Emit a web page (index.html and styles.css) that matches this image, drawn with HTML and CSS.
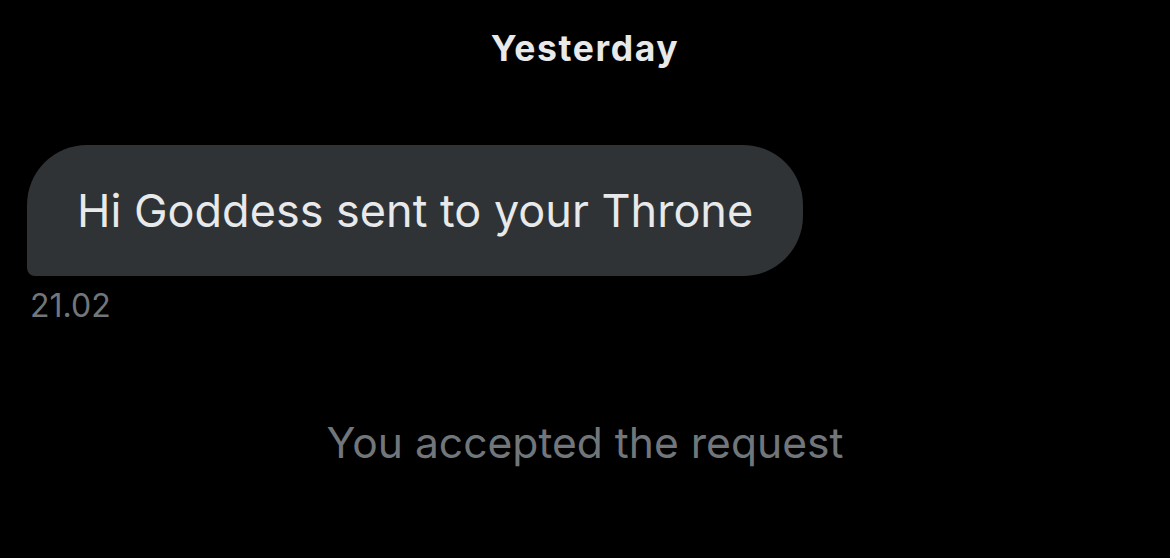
FILE: index.html
```html
<!DOCTYPE html>
<html>
<head>
<meta charset="utf-8">
<link rel="stylesheet" href="styles.css">
</head>
<body>
<main class="chat">
  <div class="day">Yesterday</div>
  <div class="msg">
    <div class="bubble">Hi Goddess sent to your Throne</div>
    <div class="time">21.02</div>
  </div>
  <div class="status">You accepted the request</div>
</main>
</body>
</html>
```
FILE: styles.css
```css
html, body {
  margin: 0;
  background: #000;
  height: 100%;
}
.chat {
  font-family: Inter, "Noto Sans", sans-serif;
  display: flex;
  flex-direction: column;
  padding: 26px 0 0 27px;
  box-sizing: border-box;
  height: 558px;
  overflow: hidden;
}
.day {
  align-self: center;
  margin-left: -27px;
  color: #e7e9ea;
  font-weight: 700;
  font-size: 35.5px;
  letter-spacing: 1.6px;
  line-height: 46px;
}
.msg {
  display: flex;
  flex-direction: column;
  align-items: flex-start;
  margin-top: 73px;
}
.bubble {
  background: #2f3336;
  color: #e7e9ea;
  font-size: 45px;
  line-height: 131px;
  height: 131px;
  padding: 0 50px;
  border-radius: 60px 60px 60px 8px;
}
.time {
  margin-top: 10px;
  padding-left: 3px;
  color: #71767b;
  font-size: 32px;
  line-height: 40px;
}
.status {
  align-self: center;
  margin-left: -27px;
  margin-top: 90px;
  color: #71767b;
  font-size: 42.6px;
  line-height: 54px;
}
```
